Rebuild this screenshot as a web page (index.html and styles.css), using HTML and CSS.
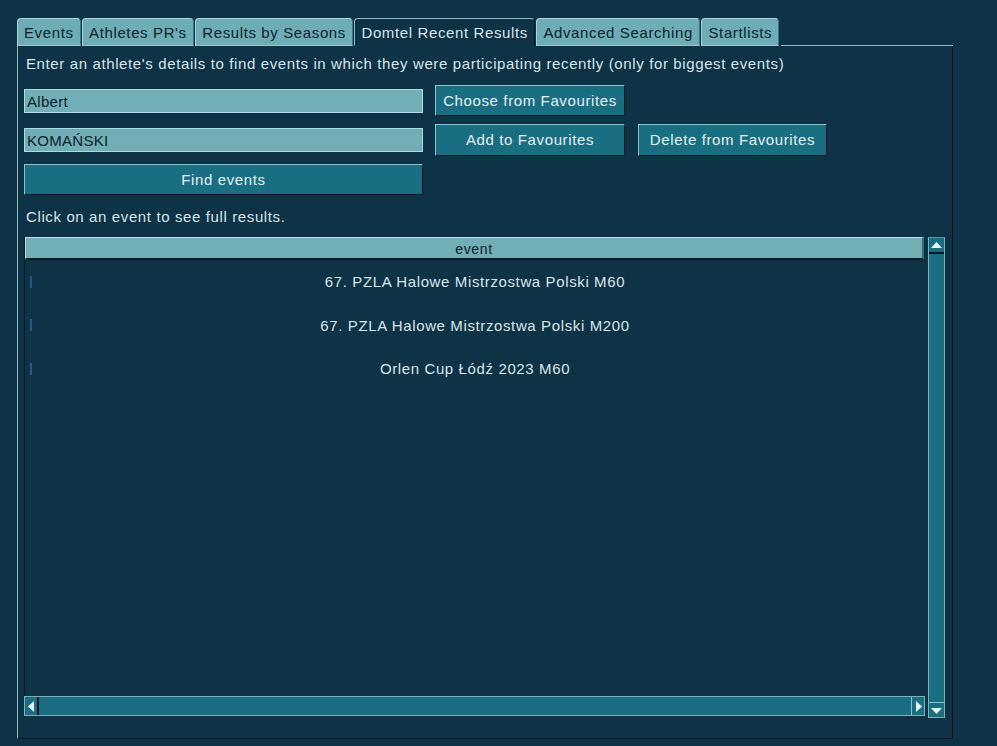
FILE: index.html
```html
<!DOCTYPE html>
<html>
<head>
<meta charset="utf-8">
<link rel="stylesheet" href="styles.css">
</head>
<body>
<div class="app">
  <div class="tabs">
    <div class="tab">Events</div>
    <div class="tab">Athletes PR's</div>
    <div class="tab">Results by Seasons</div>
    <div class="tab active">Domtel Recent Results</div>
    <div class="tab">Advanced Searching</div>
    <div class="tab">Startlists</div>
    <div class="tab-rest"></div>
  </div>
  <div class="panel">
    <div class="desc">Enter an athlete's details to find events in which they were participating recently (only for biggest events)</div>
    <div class="form-row first">
      <div class="entry-cell"><div class="entry">Albert</div></div>
      <div class="btn btn-choose">Choose from Favourites</div>
    </div>
    <div class="form-row">
      <div class="entry-cell"><div class="entry">KOMAŃSKI</div></div>
      <div class="btn btn-add">Add to Favourites</div>
      <div class="btn btn-del">Delete from Favourites</div>
    </div>
    <div class="form-row">
      <div class="btn btn-find">Find events</div>
    </div>
    <div class="hint">Click on an event to see full results.</div>
    <div class="table">
      <div class="list">
        <div class="header">event</div>
        <div class="rows">
          <div class="row"><span class="mark"></span><span class="cell">67. PZLA Halowe Mistrzostwa Polski M60</span></div>
          <div class="row"><span class="mark"></span><span class="cell">67. PZLA Halowe Mistrzostwa Polski M200</span></div>
          <div class="row"><span class="mark"></span><span class="cell">Orlen Cup Łódź 2023 M60</span></div>
        </div>
      </div>
      <div class="vscroll">
        <div class="arrow-box up"><svg width="11" height="7" viewBox="0 0 11 7"><polygon points="5.5,0 11,6 0,6" fill="#e8f4f6"/></svg></div>
        <div class="trough-v"></div>
        <div class="arrow-box down"><svg width="11" height="7" viewBox="0 0 11 7"><polygon points="0,1 11,1 5.5,7" fill="#e8f4f6"/></svg></div>
      </div>
      <div class="hscroll">
        <div class="arrow-box left"><svg width="7" height="11" viewBox="0 0 7 11"><polygon points="6,0 6,11 0,5.5" fill="#e8f4f6"/></svg></div>
        <div class="trough-h"></div>
        <div class="arrow-box right"><svg width="7" height="11" viewBox="0 0 7 11"><polygon points="1,0 1,11 7,5.5" fill="#e8f4f6"/></svg></div>
      </div>
    </div>
  </div>
</div>
</body>
</html>
```

FILE: styles.css
```css
html, body {
  margin: 0;
  padding: 0;
  background: #0e3246;
}
body {
  font-family: "Liberation Sans", Arial, sans-serif;
  font-size: 15px;
  letter-spacing: 0.62px;
  color: #d8e5e9;
  width: 997px;
  height: 746px;
  overflow: hidden;
}
.app {
  padding: 18px 0 0 17px;
  width: 936px;
}
.tabs {
  display: flex;
  height: 28px;
  align-items: flex-end;
  gap: 1.5px;
}
.tab {
  height: 28px;
  line-height: 27px;
  padding: 0 6px;
  box-sizing: border-box;
  background: #6eadb6;
  color: #0b1f2a;
  border-top: 1px solid #a6d4da;
  border-left: 1px solid #a6d4da;
  border-right: 1px solid #3f7480;
  border-bottom: 1px solid #9cc6cc;
  border-radius: 4px 4px 0 0;
}
.tab.active {
  background: #0e3246;
  color: #d8e5e9;
  border-bottom: 1px solid #0e3246;
  border-top-color: #8fb8c0;
  border-left-color: #8fb8c0;
  border-right-color: #061a25;
}
.tab-rest {
  flex: 1;
  align-self: stretch;
  border-bottom: 1px solid #8fb8c0;
}
.panel {
  height: 693px;
  box-sizing: border-box;
  border-left: 1px solid #8fb8c0;
  border-right: 1px solid #02121b;
  border-bottom: 1px solid #02121b;
  padding: 8px 0 0 6px;
}
.desc {
  line-height: 20px;
  padding-left: 2px;
}
.form-row {
  display: flex;
  align-items: center;
  margin-top: 8px;
}
.form-row.first {
  margin-top: 11px;
}
.entry-cell {
  width: 399px;
  margin-right: 12px;
}
.entry {
  height: 24px;
  line-height: 24px;
  box-sizing: border-box;
  background: #72aeb6;
  color: #0b1f2a;
  border: 1px solid #a6dde6;
  padding-left: 2px;
  letter-spacing: 0.3px;
}
.btn {
  height: 31px;
  box-sizing: border-box;
  line-height: 29px;
  text-align: center;
  background: #1a6e82;
  color: #e6f0f2;
  border-top: 1px solid #8dc3cc;
  border-left: 1px solid #8dc3cc;
  border-right: 1px solid #031722;
  border-bottom: 1px solid #031722;
}
.btn-choose { width: 190px; }
.btn-add { width: 190px; height: 32px; line-height: 30px; }
.btn-del { width: 189px; height: 32px; line-height: 30px; margin-left: 13px; }
.btn-find { width: 399px; }
.hint {
  margin-top: 12px;
  line-height: 20px;
  padding-left: 2px;
}
.table {
  margin-top: 10px;
  width: 921px;
  height: 480px;
  display: grid;
  grid-template-columns: 902px 19px;
  grid-template-rows: 459px 21px;
}
.list {
  border-left: 1px solid #041b27;
  overflow: hidden;
}
.header {
  height: 23px;
  box-sizing: border-box;
  line-height: 22px;
  text-align: center;
  font-size: 14px;
  background: #72aeb6;
  color: #0b1f2a;
  border-top: 1px solid #b4e0e6;
  border-left: 1px solid #b4e0e6;
  border-bottom: 2px solid #051a25;
  border-right: 2px solid #3b6872;
  margin-right: 2px;
}
.row {
  height: 43.5px;
  display: flex;
  align-items: center;
}
.mark {
  width: 2px;
  height: 12px;
  background: #1c5a92;
  margin-left: 5px;
}
.cell {
  flex: 1;
  text-align: center;
  padding-right: 8px;
}
.vscroll {
  grid-row: 1 / 3;
  grid-column: 2;
  display: flex;
  flex-direction: column;
  box-sizing: border-box;
  border: 1px solid #7fb0b8;
  border-top-color: #5f8f98;
  background: #1a6e82;
  margin-left: 2px;
  height: 481px;
}
.trough-v { flex: 1; }
.hscroll {
  grid-row: 2;
  grid-column: 1;
  display: flex;
  box-sizing: border-box;
  border: 1px solid #7fb0b8;
  background: #1a6e82;
  height: 20px;
  margin-right: 1px;
}
.trough-h { flex: 1; }
.arrow-box {
  display: flex;
  align-items: center;
  justify-content: center;
  background: #1a6e82;
}
.arrow-box.up {
  height: 14px;
  border-bottom: 2px solid #031722;
}
.arrow-box.down {
  height: 14px;
  border-top: 1px solid #8dc3cc;
}
.arrow-box.left {
  width: 12px;
  border-right: 2px solid #031722;
}
.arrow-box.right {
  width: 12px;
  border-left: 1px solid #8dc3cc;
}
```
